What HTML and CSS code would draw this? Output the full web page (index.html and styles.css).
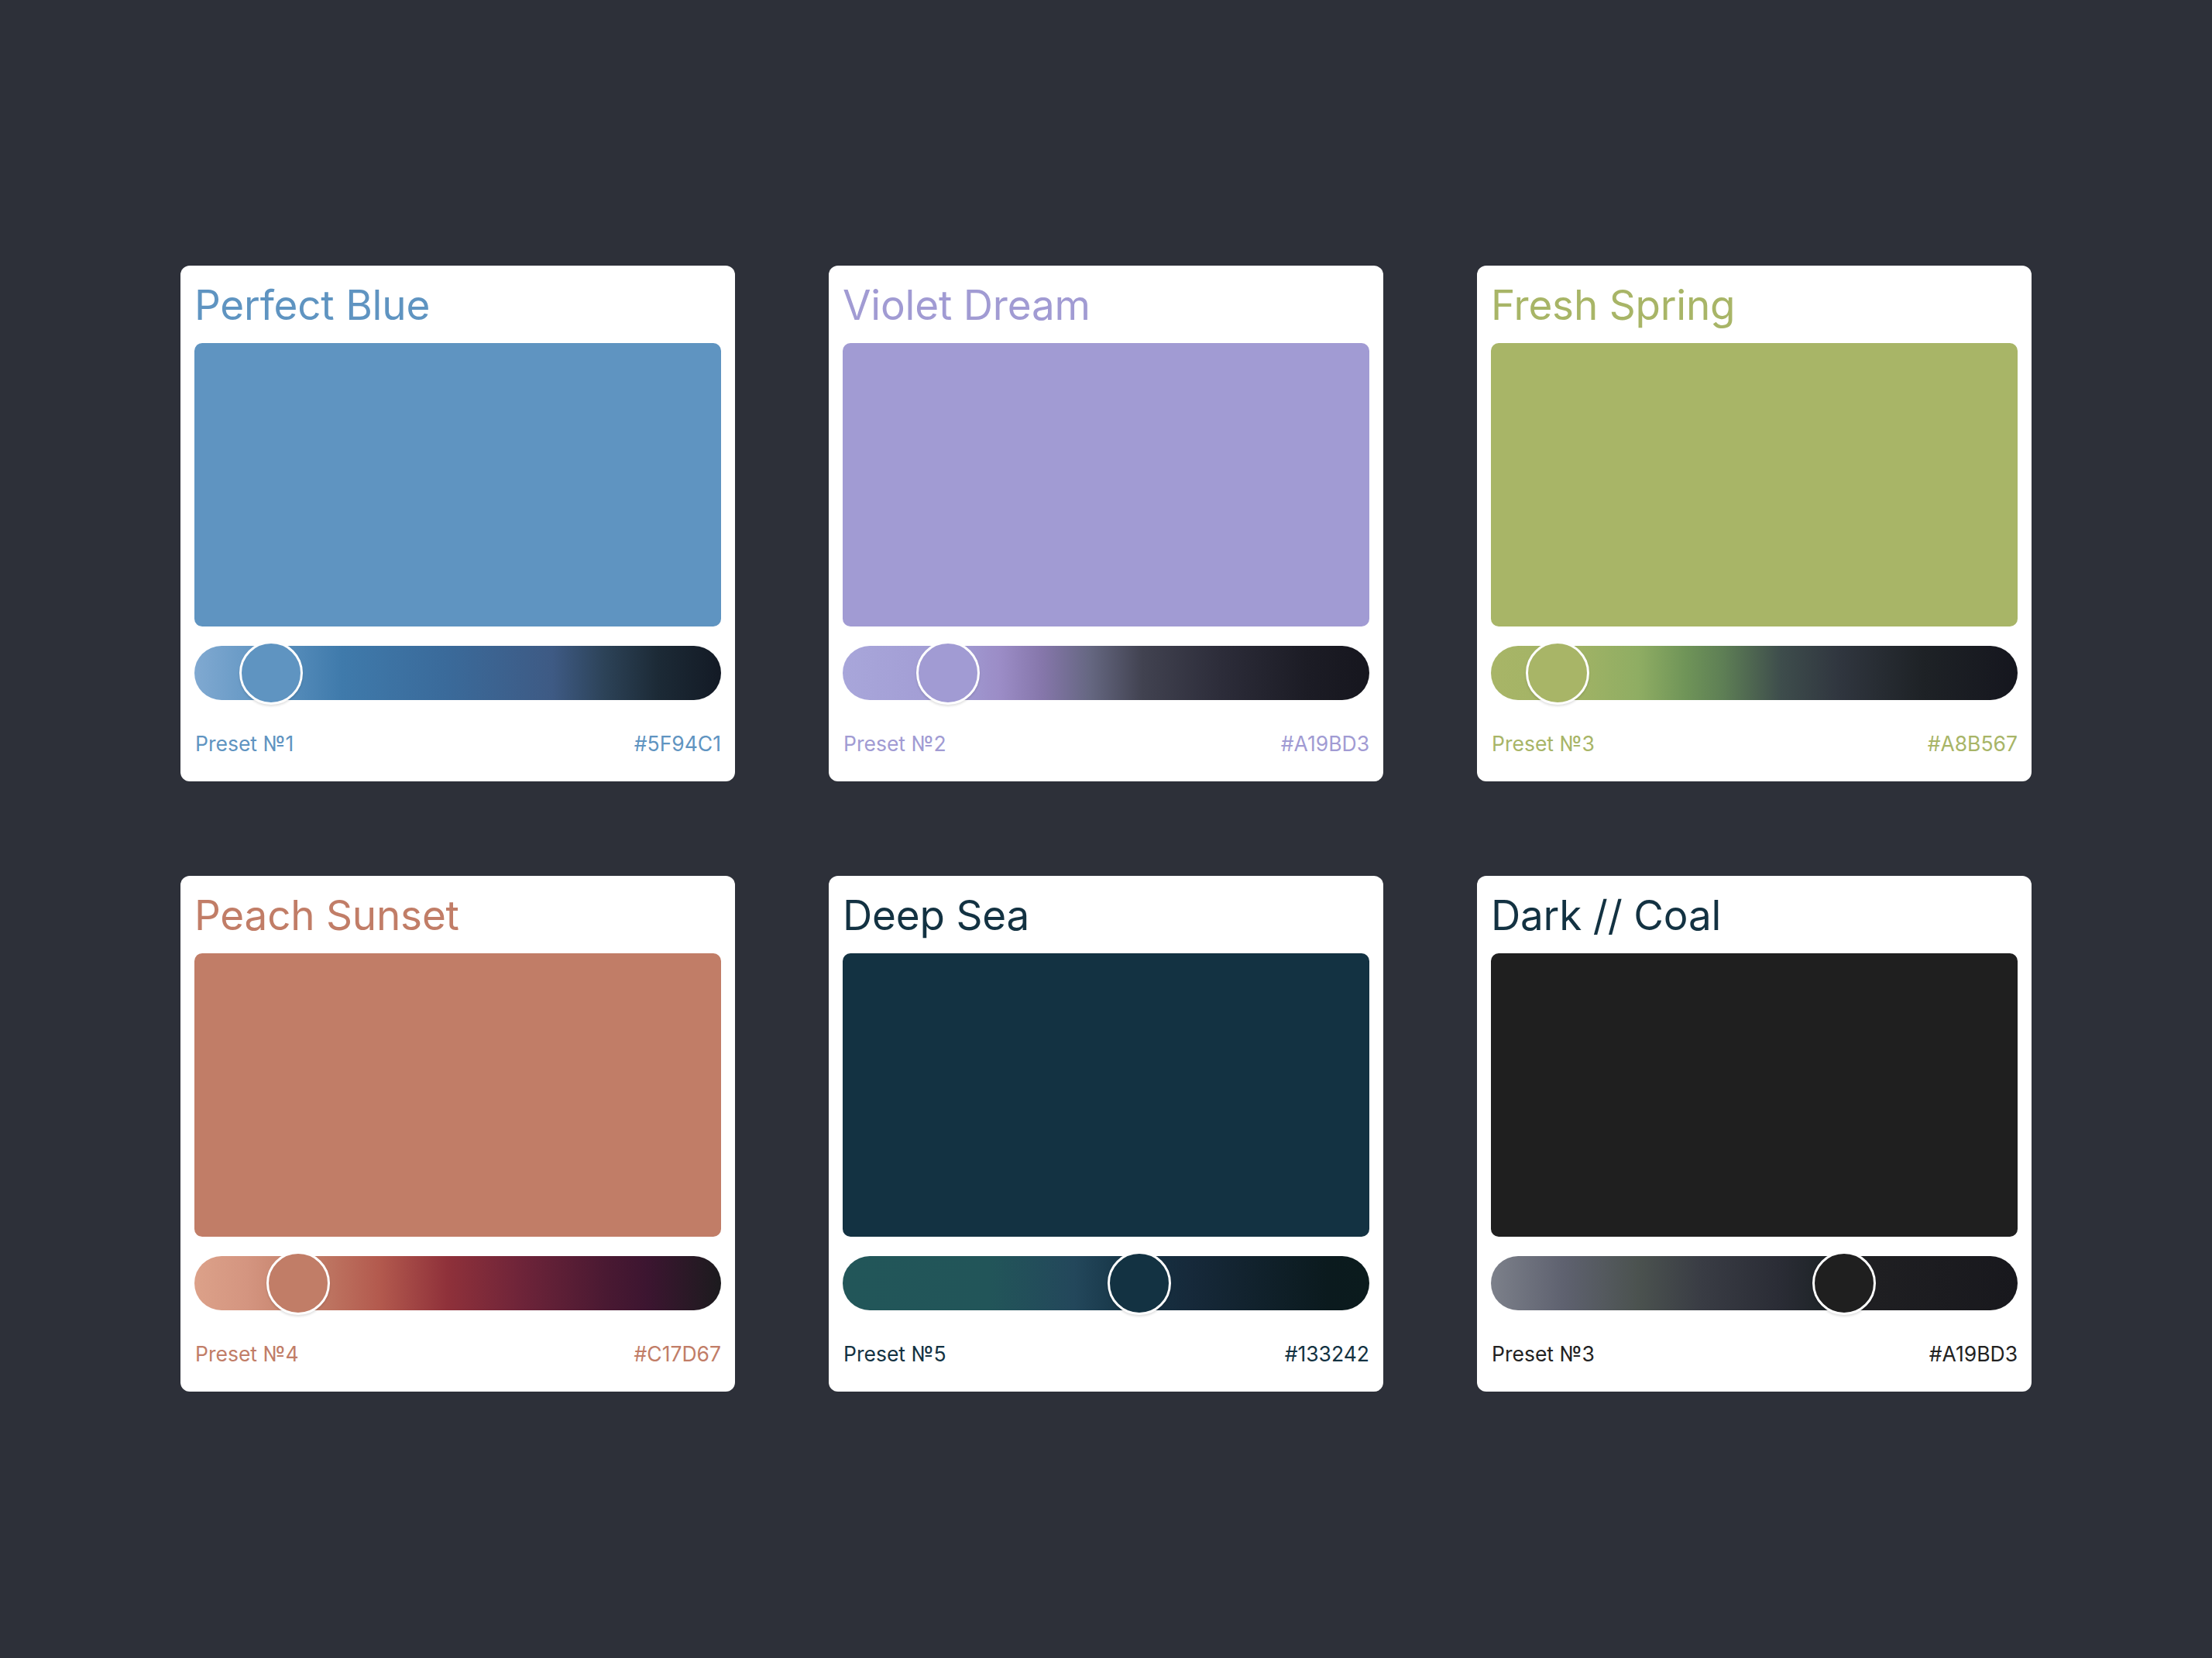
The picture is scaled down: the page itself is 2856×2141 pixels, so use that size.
FILE: index.html
```html
<!DOCTYPE html>
<html lang="en">
<head>
<meta charset="UTF-8" />
<meta name="viewport" content="width=device-width, initial-scale=1" />
<title>Color Presets</title>
<link rel="stylesheet" href="styles.css">
</head>
<body>

<div class="grid">

  <div class="card blue">
    <h2 class="title">Perfect Blue</h2>
    <div class="swatch"></div>
    <div class="track"><span class="knob" style="left: 58px"></span></div>
    <div class="meta"><span>Preset №1</span><span>#5F94C1</span></div>
  </div>

  <div class="card violet">
    <h2 class="title">Violet Dream</h2>
    <div class="swatch"></div>
    <div class="track"><span class="knob" style="left: 95px"></span></div>
    <div class="meta"><span>Preset №2</span><span>#A19BD3</span></div>
  </div>

  <div class="card green">
    <h2 class="title">Fresh Spring</h2>
    <div class="swatch"></div>
    <div class="track"><span class="knob" style="left: 45px"></span></div>
    <div class="meta"><span>Preset №3</span><span>#A8B567</span></div>
  </div>

  <div class="card peach">
    <h2 class="title">Peach Sunset</h2>
    <div class="swatch"></div>
    <div class="track"><span class="knob" style="left: 93px"></span></div>
    <div class="meta"><span>Preset №4</span><span>#C17D67</span></div>
  </div>

  <div class="card sea">
    <h2 class="title">Deep Sea</h2>
    <div class="swatch"></div>
    <div class="track"><span class="knob" style="left: 342px"></span></div>
    <div class="meta"><span>Preset №5</span><span>#133242</span></div>
  </div>

  <div class="card coal">
    <h2 class="title">Dark // Coal</h2>
    <div class="swatch"></div>
    <div class="track"><span class="knob" style="left: 415px"></span></div>
    <div class="meta"><span>Preset №3</span><span>#A19BD3</span></div>
  </div>

</div>

</body>
</html>
```

FILE: styles.css
```css
/* --- Page --- */
body {
  margin: 0;
  min-height: 100vh;
  background-color: #2d3039;
  font-family: Inter, "Noto Sans", Arial, sans-serif;
  display: flex;
  justify-content: center;
  align-items: flex-start;
}
.grid {
  display: grid;
  grid-template-columns: repeat(3, 716px);
  column-gap: 121px;
  row-gap: 122px;
  padding-top: 343px;
}

/* Card */
.card {
  --c: #5F94C1;
  --t: var(--c);
  box-sizing: border-box;
  width: 716px;
  height: 666px;
  padding: 24px 18px 0 18px;
  background-color: #fff;
  border-radius: 12px;
  color: var(--t);
}
.title {
  margin: 0 0 21px 0;
  font-size: 53px;
  line-height: 55px;
  font-weight: 400;
  letter-spacing: -0.2px;
}
.swatch {
  height: 366px;
  border-radius: 10px;
  background-color: var(--c);
}

/* Slider */
.track {
  position: relative;
  height: 70px;
  margin-top: 25px;
  border-radius: 35px;
}
.knob {
  position: absolute;
  top: -6px;
  box-sizing: border-box;
  width: 82px;
  height: 82px;
  border-radius: 50%;
  border: 3px solid #fff;
  background-color: var(--c);
  box-shadow: 0 2px 3px rgba(0, 0, 0, 0.12);
}

/* Footer line */
.meta {
  display: flex;
  justify-content: space-between;
  margin-top: 43px;
  padding: 0 0 0 1px;
  font-size: 26.5px;
  line-height: 26px;
}

/* Presets */
.blue { --c: #5F94C1; }
.blue .track {
  background: linear-gradient(90deg, #80a9d1 0%, #5f94c1 14%, #3f7aab 28%, #3a6a9a 48%, #3e5a84 68%, #2c4257 78%, #1c2a36 88%, #131a25 100%);
}
.violet { --c: #A19BD3; }
.violet .track {
  background: linear-gradient(90deg, #a8a6da 0%, #a19bd3 22%, #9b8cc6 30%, #8576aa 38%, #656781 47%, #414250 57%, #2c2c39 72%, #1c1c25 88%, #16161e 100%);
}
.green { --c: #A8B567; }
.green .track {
  background: linear-gradient(90deg, #a8b567 0%, #a1b365 16%, #8fad63 28%, #6f9458 37%, #5e7f55 44%, #3e4d4c 55%, #30363f 66%, #1e2226 82%, #15161e 100%);
}
.peach { --c: #C17D67; }
.peach .track {
  background: linear-gradient(90deg, #dca189 0%, #d49580 10%, #c17d67 22%, #b35a4e 35%, #8f313a 48%, #6e2439 62%, #4a1932 78%, #3c1530 86%, #1c1b1e 100%);
}
.sea { --c: #133242; --t: #133242; }
.sea .track {
  background: linear-gradient(90deg, #225659 0%, #225559 28%, #23475b 44%, #153344 55%, #16293a 66%, #12232f 76%, #0b1a1e 92%, #0b1b1d 100%);
}
.coal { --c: #1f1f1f; --t: #133242; }
.coal .track {
  background: linear-gradient(90deg, #7c808a 0%, #5e616f 14%, #4b524f 28%, #393c44 40%, #2a2c35 55%, #1c2225 65%, #1f1f22 72%, #18181d 100%);
}
.coal .meta {
  color: #222;
}
```
